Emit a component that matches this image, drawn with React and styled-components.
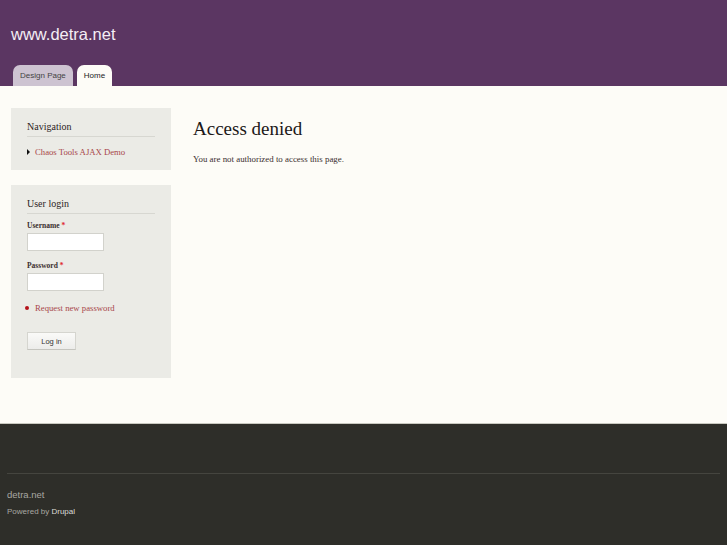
import React from 'react';
import styled, { createGlobalStyle } from 'styled-components';

const GlobalStyle = createGlobalStyle`
    html, body {
        margin: 0;
        padding: 0;
        background: #2e2e29;
    }
`;

const Page = styled.div`
    width: 727px;
    min-height: 545px;
    display: flex;
    flex-direction: column;
    font-family: "Liberation Serif", "Times New Roman", serif;
`;

const Header = styled.header`
    background-color: #5b3662;
    height: 86px;
    display: flex;
    flex-direction: column;
    justify-content: space-between;
    padding: 0 11px;
    box-sizing: border-box;
`;

const SiteName = styled.h1`
    margin: 24px 0 0 0;
    font-family: "Liberation Sans", Arial, sans-serif;
    font-weight: normal;
    font-size: 16.5px;
    line-height: 20px;
    color: #f4eef5;
`;

const Tabs = styled.ul`
    display: flex;
    gap: 4px;
    list-style: none;
    margin: 0 0 0 2px;
    padding: 0;
`;

const Tab = styled.li`
    height: 21px;
    padding: 0 7px;
    display: flex;
    align-items: center;
    border-radius: 7px 7px 0 0;
    background-color: ${props => (props.active ? '#fdfcf7' : '#cdc3d1')};
    font-family: "Liberation Sans", Arial, sans-serif;
    font-size: 8px;
    color: ${props => (props.active ? '#222' : '#444')};
`;

const Main = styled.div`
    flex: 0 0 338px;
    background-color: #fdfcf7;
    display: flex;
    align-items: flex-start;
    padding: 22px 11px 0 11px;
    box-sizing: border-box;
    border-bottom: 1px solid #c9c9c0;
`;

const Sidebar = styled.aside`
    width: 160px;
    display: flex;
    flex-direction: column;
    gap: 15px;
`;

const Block = styled.div`
    background-color: #ebebe6;
    padding: 13px 16px 0 16px;
    height: ${props => props.height}px;
    box-sizing: border-box;
`;

const BlockTitle = styled.h2`
    margin: 0;
    font-size: 10px;
    font-weight: normal;
    color: #2d2424;
    line-height: 12px;
    padding-bottom: 3px;
    border-bottom: 1px solid #d7d7d1;
`;

const NavList = styled.ul`
    list-style: none;
    margin: 9px 0 0 0;
    padding: 0;
`;

const NavItem = styled.li`
    display: flex;
    align-items: center;
    gap: 5px;
    font-size: 8.7px;
    line-height: 12px;
    color: #a8474a;
`;

const Arrow = styled.span`
    width: 0;
    height: 0;
    border-top: 3px solid transparent;
    border-bottom: 3px solid transparent;
    border-left: 3px solid #111;
`;

const Field = styled.div`
    margin-top: ${props => props.top}px;
`;

const Label = styled.label`
    display: block;
    font-size: 7.5px;
    font-weight: bold;
    color: #3a2e2e;
    line-height: 9px;
    margin-bottom: 3px;
`;

const Required = styled.span`
    color: #e0262b;
`;

const Input = styled.input`
    display: block;
    width: 77px;
    height: 18px;
    box-sizing: border-box;
    border: 1px solid #d2d2cc;
    background: #fff;
    padding: 0;
    margin: 0;
`;

const LinkItem = styled.div`
    display: flex;
    align-items: center;
    gap: 6px;
    margin-top: 12px;
    font-size: 8.7px;
    color: #a8474a;
    line-height: 10px;
`;

const Dot = styled.span`
    width: 4px;
    height: 4px;
    border-radius: 50%;
    background: #b4121a;
    margin-left: -2px;
`;

const Button = styled.button`
    display: block;
    margin-top: 19px;
    width: 49px;
    height: 18px;
    padding: 0;
    border: 1px solid #d5d5cf;
    border-bottom-color: #c5c5bf;
    background: linear-gradient(#fafaf8, #ececea);
    font-family: "Liberation Sans", Arial, sans-serif;
    font-size: 7.5px;
    color: #333;
`;

const Content = styled.main`
    margin-left: 22px;
`;

const Title = styled.h1`
    margin: 10px 0 0 0;
    font-size: 19px;
    font-weight: normal;
    line-height: 22px;
    color: #1c1818;
`;

const Text = styled.p`
    margin: 14px 0 0 0;
    font-size: 8.9px;
    color: #3a2e2e;
    line-height: 10px;
`;

const Footer = styled.footer`
    flex: 1;
    background-color: #2e2e29;
    padding: 49px 7px 0 7px;
`;

const Rule = styled.div`
    height: 1px;
    background: #45453f;
    width: 713px;
`;

const FooterName = styled.div`
    margin-top: 15px;
    font-family: "Liberation Sans", Arial, sans-serif;
    font-size: 9.5px;
    color: #a8a8a2;
`;

const Powered = styled.div`
    margin-top: 7px;
    font-family: "Liberation Sans", Arial, sans-serif;
    font-size: 8px;
    color: #a8a8a2;

    span {
        color: #dcdcd6;
    }
`;

const App = () => {
    return (
        <Page>
            <GlobalStyle />
            <Header>
                <SiteName>www.detra.net</SiteName>
                <Tabs>
                    <Tab>Design Page</Tab>
                    <Tab active>Home</Tab>
                </Tabs>
            </Header>
            <Main>
                <Sidebar>
                    <Block height={62}>
                        <BlockTitle>Navigation</BlockTitle>
                        <NavList>
                            <NavItem><Arrow />Chaos Tools AJAX Demo</NavItem>
                        </NavList>
                    </Block>
                    <Block height={193}>
                        <BlockTitle>User login</BlockTitle>
                        <Field top={7}>
                            <Label>Username <Required>*</Required></Label>
                            <Input type="text" />
                        </Field>
                        <Field top={10}>
                            <Label>Password <Required>*</Required></Label>
                            <Input type="password" />
                        </Field>
                        <LinkItem><Dot />Request new password</LinkItem>
                        <Button>Log in</Button>
                    </Block>
                </Sidebar>
                <Content>
                    <Title>Access denied</Title>
                    <Text>You are not authorized to access this page.</Text>
                </Content>
            </Main>
            <Footer>
                <Rule />
                <FooterName>detra.net</FooterName>
                <Powered>Powered by <span>Drupal</span></Powered>
            </Footer>
        </Page>
    );
};

export default App;
